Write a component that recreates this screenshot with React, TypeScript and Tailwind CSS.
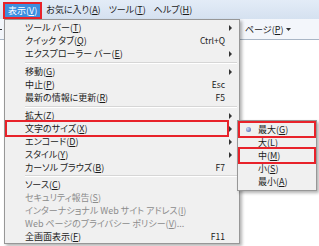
import React from 'react';

type Item =
  | { sep: number }
  | { label: React.ReactNode; key?: string; sub?: boolean; off?: boolean; mark?: boolean };

const U = ({ c }: { c: string }) => <span className="underline">{c}</span>;

const items: Item[] = [
  { label: <>ツール バー(<U c="T" />)</>, sub: true },
  { label: <>クイック タブ(<U c="Q" />)</>, key: 'Ctrl+Q' },
  { label: <>エクスプローラー バー(<U c="E" />)</>, sub: true },
  { sep: 5 },
  { label: <>移動(<U c="G" />)</>, sub: true },
  { label: <>中止(<U c="P" />)</>, key: 'Esc' },
  { label: <>最新の情報に更新(<U c="R" />)</>, key: 'F5' },
  { sep: 5 },
  { label: <>拡大(<U c="Z" />)</>, sub: true },
  { label: <>文字のサイズ(<U c="X" />)</>, sub: true, mark: true },
  { label: <>エンコード(<U c="D" />)</>, sub: true },
  { label: <>スタイル(<U c="Y" />)</>, sub: true },
  { label: <>カーソル ブラウズ(<U c="B" />)</>, key: 'F7' },
  { sep: 4 },
  { label: <>ソース(<U c="C" />)</> },
  { label: <>セキュリティ報告(<U c="S" />)</>, off: true },
  { label: <>インターナショナル Web サイト アドレス(<U c="I" />)</>, off: true },
  { label: <>Web ページのプライバシー ポリシー(<U c="V" />)...</>, off: true },
  { label: <>全画面表示(<U c="F" />)</>, key: 'F11' },
];

const sizes = [
  { label: <>最大(<U c="G" />)</>, dot: true, mark: true },
  { label: <>大(<U c="L" />)</> },
  { label: <>中(<U c="M" />)</>, mark: true },
  { label: <>小(<U c="S" />)</> },
  { label: <>最小(<U c="A" />)</> },
];

const Arrow = () => (
  <svg width="4" height="6" viewBox="0 0 4 6">
    <path d="M0 0 L3 3 L0 6 Z" fill="#333" />
  </svg>
);

export default function App() {
  return (
    <div
      className="relative w-[319px] h-[246px] overflow-hidden bg-white text-[9px] leading-none text-[#1b1b1b] [font-feature-settings:'palt']"
      style={{ fontFamily: '"Noto Sans CJK JP", "Noto Sans", sans-serif' }}
    >
      {/* menu bar */}
      <div className="h-[19px] flex items-center pl-[3px] bg-gradient-to-b from-[#e3ecf7] to-[#d5e1f0]">
        <div className="h-[17px] mt-[1px] px-[3px] flex items-center border-2 border-[#e8222a] bg-[#3c8ee0] text-white">
          表示(<U c="V" />)
        </div>
        <div className="px-[4px]">お気に入り(<U c="A" />)</div>
        <div className="px-[4px]">ツール(<U c="T" />)</div>
        <div className="px-[4px]">ヘルプ(<U c="H" />)</div>
      </div>

      <div className="flex">
        {/* left strip */}
        <div className="w-[4px] h-[21px] bg-[#f3f6fb] border-b border-[#a9b6c6] relative">
          <div className="absolute left-0 top-[10px] w-[2px] h-[1px] bg-[#333]" />
        </div>

        {/* dropdown */}
        <div className="relative z-10 w-[236px] h-[225px] bg-[#f0f0f0] border border-[#979797] shadow-[2px_2px_3px_rgba(0,0,0,0.3)] pt-[1px]">
          {items.map((it, i) =>
            'sep' in it ? (
              <div
                key={i}
                className={`${it.sep === 5 ? 'h-[5px]' : 'h-[4px]'} flex items-center pl-[20px] pr-[2px]`}
              >
                <div className="w-full border-t border-[#d6d6d6] border-b border-b-white" />
              </div>
            ) : (
              <div
                key={i}
                className={`relative h-[13px] flex items-center pl-[20px] ${it.off ? 'text-[#8c8c8c]' : ''}`}
              >
                {it.mark && (
                  <div className="absolute left-0 top-[-2px] w-[224px] h-[17px] border-2 border-[#e8222a]" />
                )}
                <span className="flex-1 whitespace-nowrap">{it.label}</span>
                <span className="text-[8.5px]">{it.key}</span>
                <span className="w-[11px] flex justify-center">{it.sub && <Arrow />}</span>
                <span className="w-[3px]" />
              </div>
            )
          )}
        </div>

        {/* right page area */}
        <div className="flex-1 flex flex-col">
          <div className="h-[21px] bg-[#f3f6fb] border-b border-[#a9b6c6] flex items-center pl-[5px] text-[#1b1b1b]">
            ページ(<U c="P" />)
            <svg className="ml-[3px]" width="5" height="3" viewBox="0 0 5 3">
              <path d="M0 0 H5 L2.5 3 Z" fill="#333" />
            </svg>
          </div>
        </div>
      </div>

      {/* text size submenu */}
      <div className="absolute z-20 left-[237px] top-[120px] w-[80px] bg-[#f0f0f0] border border-[#979797] shadow-[2px_2px_3px_rgba(0,0,0,0.3)] py-[2px]">
        {sizes.map((s, i) => (
          <div key={i} className="relative h-[13px] flex items-center">
            {s.mark && (
              <div className="absolute left-0 top-[-2px] w-[78px] h-[17px] border-2 border-[#e8222a]" />
            )}
            <span className="w-[20px] flex justify-center">
              {s.dot && (
                <span className="w-[5px] h-[5px] rounded-full bg-[radial-gradient(circle_at_35%_35%,#c9d6f2,#3d56a6)]" />
              )}
            </span>
            <span>{s.label}</span>
          </div>
        ))}
      </div>
    </div>
  );
}
